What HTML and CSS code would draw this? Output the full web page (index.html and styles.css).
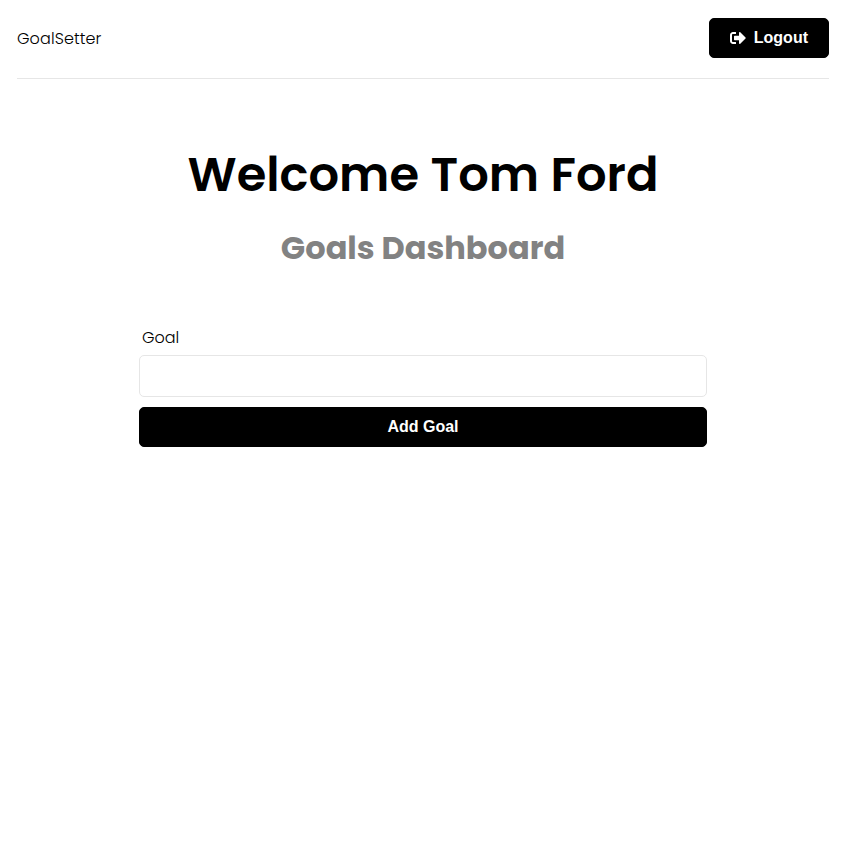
FILE: index.html
```html
<!DOCTYPE html>
<html lang="en">
<head>
<meta charset="utf-8">
<title>GoalSetter</title>
<link rel="stylesheet" href="styles.css">
</head>
<body>
<div class="container">
  <header class="header">
    <a class="logo">GoalSetter</a>
    <button class="btn"><svg class="icon" viewBox="0 0 512 512"><path fill="currentColor" d="M497 273L329 441c-15 15-41 4.500-41-17v-96H152c-13.300 0-24-10.700-24-24v-96c0-13.300 10.700-24 24-24h136V88c0-21.400 25.900-32 41-17l168 168c9.300 9.400 9.300 24.600 0 34zM192 436v-40c0-6.600-5.400-12-12-12H96c-17.700 0-32-14.300-32-32V160c0-17.700 14.300-32 32-32h84c6.600 0 12-5.400 12-12V76c0-6.600-5.400-12-12-12H96c-53 0-96 43-96 96v192c0 53 43 96 96 96h84c6.600 0 12-5.400 12-12z"/></svg>Logout</button>
  </header>
  <section class="heading">
    <h1>Welcome Tom Ford</h1>
    <p>Goals Dashboard</p>
  </section>
  <section class="form">
    <label for="goal">Goal</label>
    <input id="goal" type="text">
    <button class="btn btn-block">Add Goal</button>
  </section>
</div>
</body>
</html>
```
FILE: styles.css
```css
* { box-sizing: border-box; margin: 0; padding: 0; }
body { font-family: Poppins, Inter, sans-serif; background: #fff; color: #000; font-size: 16px; }
.container { width: 812px; margin-left: 17px; }
.header { display: flex; justify-content: space-between; align-items: center; height: 79px; padding: 18px 0 20px; border-bottom: 1px solid #e6e6e6; }
.logo { font-weight: 300; letter-spacing: 0.1px; }
.btn { display: flex; align-items: center; justify-content: center; height: 40px; padding: 0 20px; border: 1px solid #000; border-radius: 5px; background: #000; color: #fff; font: 700 16px "Liberation Sans", sans-serif; }
.icon { width: 16px; height: 16px; margin-right: 8px; }
.heading { text-align: center; margin-top: 60px; }
h1 { font-size: 48px; line-height: 72px; font-weight: 600; white-space: nowrap; }
.heading p { font-size: 32px; line-height: 48px; font-weight: 700; color: #828282; margin-top: 13px; }
.form { width: 568px; margin: 54px auto 0; }
label { display: block; line-height: 24px; margin: 0 0 5px 3px; font-weight: 300; }
input { display: block; width: 100%; height: 42px; border: 1px solid #e6e6e6; border-radius: 5px; margin-bottom: 10px; padding: 10px; }
.btn-block { width: 100%; }
```
